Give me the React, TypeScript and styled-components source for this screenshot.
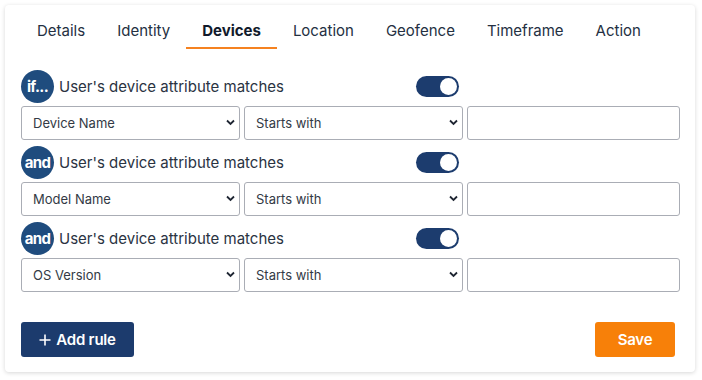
import styled, { createGlobalStyle } from "styled-components";

const GlobalStyle = createGlobalStyle`
  body {
    margin: 0;
    background: #ffffff;
    font-family: Inter, "Noto Sans", sans-serif;
    color: #1f2633;
  }
`;

const Card = styled.div`
  margin: 5px;
  width: 690px;
  height: 367px;
  box-sizing: border-box;
  padding: 8px 15px 15px 16px;
  background: #ffffff;
  border-radius: 4px;
  box-shadow: 0 1px 4px rgba(0, 0, 0, 0.16);
  display: flex;
  flex-direction: column;
`;

const Tabs = styled.div`
  display: flex;
`;

const Tab = styled.div<{ $active?: boolean }>`
  padding: 9px 16px 7px;
  font-size: 15px;
  line-height: 18px;
  font-weight: ${(p) => (p.$active ? 700 : 400)};
  color: ${(p) => (p.$active ? "#111a2b" : "#243042")};
  border-bottom: 2px solid ${(p) => (p.$active ? "#f58220" : "transparent")};
  cursor: pointer;
`;

const Rules = styled.div`
  margin-top: 20px;
  display: flex;
  flex-direction: column;
  gap: 5px;
`;

const Rule = styled.div`
  display: flex;
  flex-direction: column;
  gap: 3px;
`;

const RuleHead = styled.div`
  width: 438px;
  height: 34px;
  display: flex;
  align-items: center;
  justify-content: space-between;
`;

const Label = styled.div`
  display: flex;
  align-items: center;
  gap: 5px;
  font-size: 15px;
  color: #2a3342;
`;

const Badge = styled.span`
  width: 33px;
  height: 33px;
  border-radius: 50%;
  background: #1f4c7e;
  color: #ffffff;
  font-weight: 700;
  font-size: 15px;
  letter-spacing: -0.6px;
  display: flex;
  align-items: center;
  justify-content: center;
`;

const Toggle = styled.div<{ $on?: boolean }>`
  width: 43px;
  height: 21px;
  border-radius: 11px;
  background: ${(p) => (p.$on ? "#1c3c6e" : "#c7cbd3")};
  position: relative;
  &::after {
    content: "";
    position: absolute;
    top: 2px;
    left: ${(p) => (p.$on ? "24px" : "2px")};
    width: 17px;
    height: 17px;
    border-radius: 50%;
    background: #ffffff;
  }
`;

const Fields = styled.div`
  display: grid;
  grid-template-columns: 219px 219px minmax(0, 1fr);
  column-gap: 4px;
`;

const SelectWrap = styled.div`
  position: relative;
  svg {
    position: absolute;
    right: 5px;
    top: 13px;
    pointer-events: none;
  }
`;

const Select = styled.select`
  appearance: none;
  width: 100%;
  height: 34px;
  box-sizing: border-box;
  border: 1px solid #aaadb5;
  border-radius: 3px;
  background: #ffffff;
  padding: 0 24px 0 11px;
  font-family: Inter, "Noto Sans", sans-serif;
  font-size: 13px;
  color: #333a45;
  outline: none;
`;

const Input = styled.input`
  width: 100%;
  min-width: 0;
  height: 34px;
  box-sizing: border-box;
  border: 1px solid #aaadb5;
  border-radius: 3px;
  padding: 0 10px;
  font-family: Inter, "Noto Sans", sans-serif;
  font-size: 13px;
  outline: none;
`;

const Footer = styled.div`
  margin-top: auto;
  display: flex;
  justify-content: space-between;
  align-items: center;
  padding-right: 5px;
`;

const Button = styled.button<{ $tone: "navy" | "orange" }>`
  height: 35px;
  border: none;
  border-radius: 3px;
  padding: 0;
  width: ${(p) => (p.$tone === "navy" ? "113px" : "80px")};
  background: ${(p) => (p.$tone === "navy" ? "#1c3b6d" : "#f78009")};
  color: #ffffff;
  font-family: Inter, "Noto Sans", sans-serif;
  font-size: 15px;
  font-weight: 600;
  letter-spacing: -0.2px;
  display: flex;
  align-items: center;
  justify-content: center;
  gap: 5px;
  cursor: pointer;
`;

const Chevron = () => (
  <svg width="9" height="7" viewBox="0 0 9 7">
    <path d="M1 1.5 L4.5 5 L8 1.5" fill="none" stroke="#1f2633" strokeWidth="1.8" />
  </svg>
);

const Plus = () => (
  <svg width="12" height="12" viewBox="0 0 12 12">
    <path d="M6 0.5 V11.5 M0.5 6 H11.5" stroke="#ffffff" strokeWidth="1.6" />
  </svg>
);

const tabs = ["Details", "Identity", "Devices", "Location", "Geofence", "Timeframe", "Action"];

const rules = [
  { op: "if...", attr: "Device Name" },
  { op: "and", attr: "Model Name" },
  { op: "and", attr: "OS Version" },
];

const attributes = ["Device Name", "Model Name", "OS Version"];

export default function App() {
  return (
    <>
      <GlobalStyle />
      <Card>
        <Tabs>
          {tabs.map((t) => (
            <Tab key={t} $active={t === "Devices"}>
              {t}
            </Tab>
          ))}
        </Tabs>
        <Rules>
          {rules.map((r, i) => (
            <Rule key={i}>
              <RuleHead>
                <Label>
                  <Badge>{r.op}</Badge>
                  User's device attribute matches
                </Label>
                <Toggle $on />
              </RuleHead>
              <Fields>
                <SelectWrap>
                  <Select defaultValue={r.attr}>
                    {attributes.map((a) => (
                      <option key={a}>{a}</option>
                    ))}
                  </Select>
                  <Chevron />
                </SelectWrap>
                <SelectWrap>
                  <Select defaultValue="Starts with">
                    <option>Starts with</option>
                    <option>Ends with</option>
                    <option>Contains</option>
                  </Select>
                  <Chevron />
                </SelectWrap>
                <Input />
              </Fields>
            </Rule>
          ))}
        </Rules>
        <Footer>
          <Button $tone="navy">
            <Plus />
            Add rule
          </Button>
          <Button $tone="orange">Save</Button>
        </Footer>
      </Card>
    </>
  );
}
